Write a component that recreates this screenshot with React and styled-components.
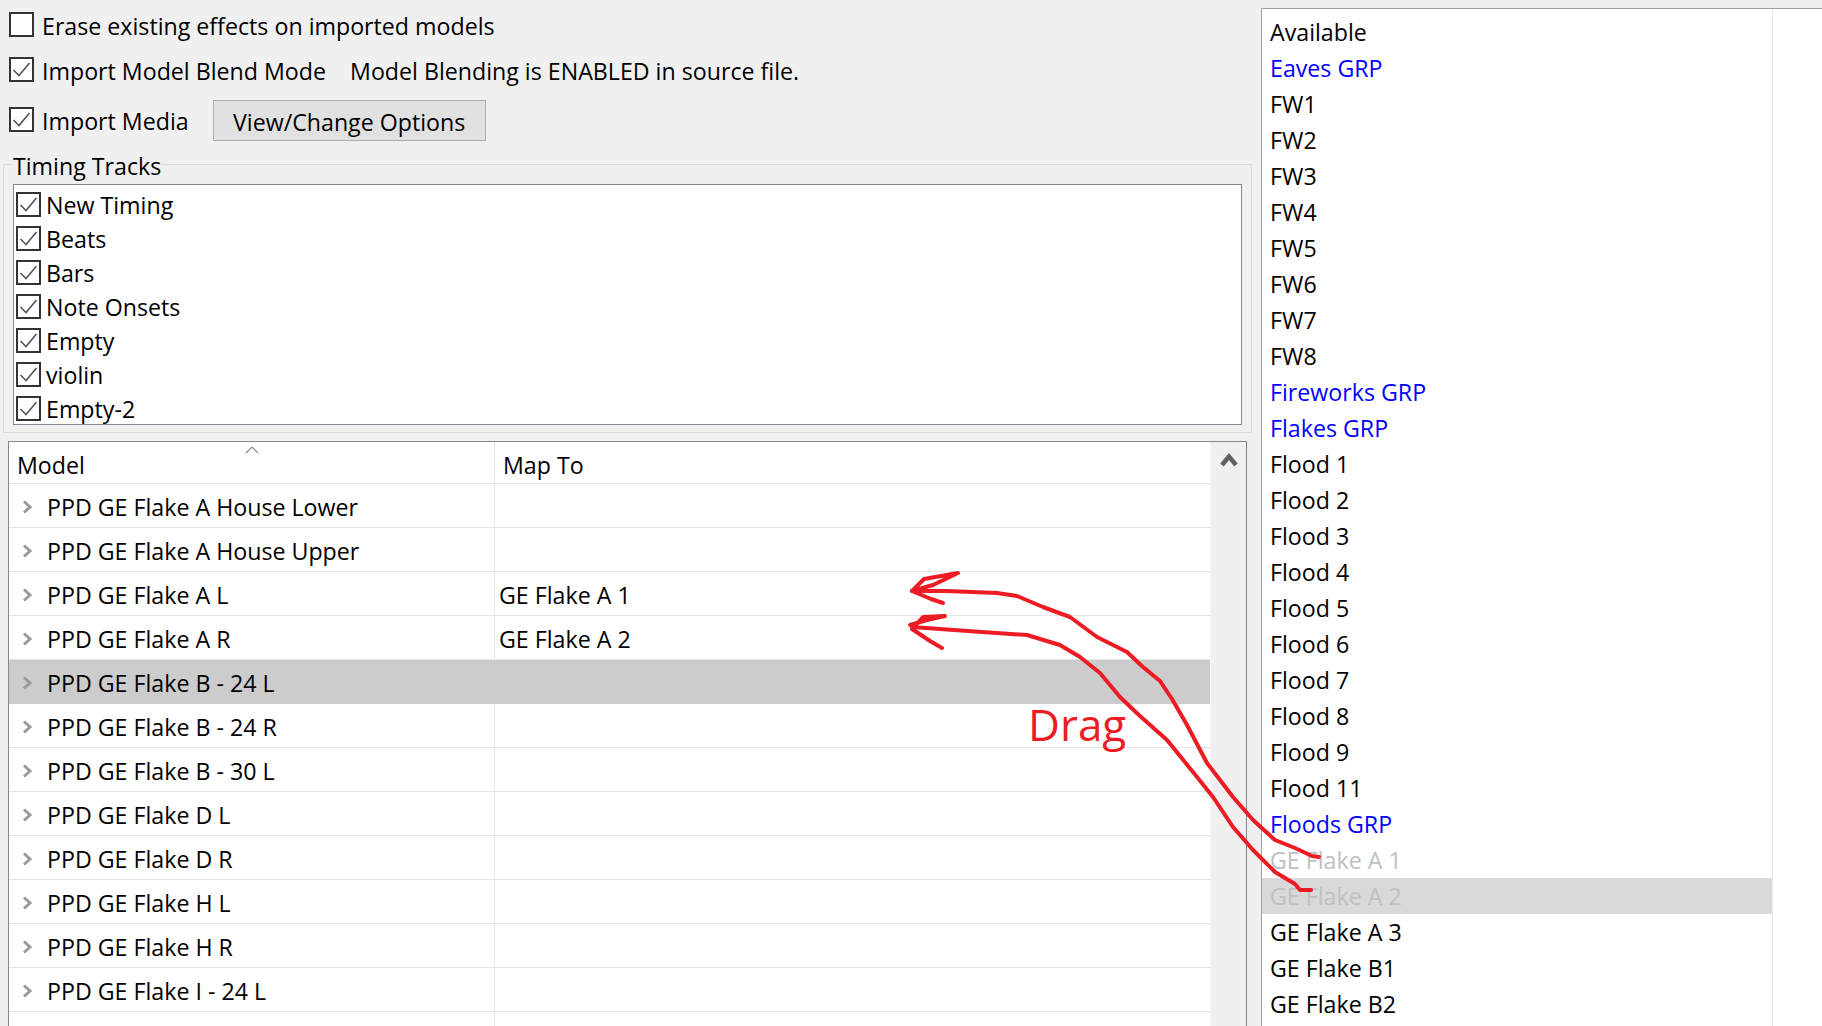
import React from 'react'
import styled, { createGlobalStyle } from 'styled-components'

const FONT = `"Open Sans", "Noto Sans", "Liberation Sans", sans-serif`
const RED = '#ed1c24'

const GlobalStyle = createGlobalStyle`
  html, body {
    margin: 0;
    padding: 0;
    background: #f0f0f0;
  }
  body {
    font-family: ${FONT};
    font-size: 23.2px;
    color: #000;
  }
`

const Window = styled.div`
  position: relative;
  display: flex;
  width: 1822px;
  height: 1026px;
  overflow: hidden;
  background: #f0f0f0;
`

const LeftPane = styled.div`
  width: 1261px;
  flex-shrink: 0;
  display: flex;
  flex-direction: column;
  min-height: 0;
`

const Options = styled.div`
  display: flex;
  flex-direction: column;
  padding: 2px 0 0 9px;
`

const OptionRow = styled.div`
  display: flex;
  align-items: center;
  height: ${props => props.h}px;
  margin-top: ${props => props.top || 0}px;
  line-height: 30px;
`

const Label = styled.span`
  margin-left: ${props => props.gap}px;
  padding-top: ${props => props.nudge || 0}px;
  white-space: nowrap;
`

const Note = styled.span`
  margin-left: 24px;
  padding-top: 3px;
  white-space: nowrap;
`

const Button = styled.button`
  box-sizing: border-box;
  width: 273px;
  height: 41px;
  margin: 1px 0 0 24px;
  padding: 3px 0 0;
  background: #e1e1e1;
  border: 1px solid #adadad;
  font-family: ${FONT};
  font-size: 23.2px;
  color: #000;
`

const GroupBox = styled.fieldset`
  box-sizing: border-box;
  min-width: 0;
  margin: 6px 9px 0 3px;
  padding: 2px 9px 7px 9px;
  border: 1px solid #dcdcdc;
`

const Legend = styled.legend`
  padding: 4px 0 0;
  line-height: 32px;
`

const TrackList = styled.div`
  box-sizing: border-box;
  height: 241px;
  padding: 2px 0 0 2px;
  background: #fff;
  border: 1px solid #828790;
  overflow: hidden;
`

const TrackRow = styled.div`
  display: flex;
  align-items: center;
  height: 34px;
  line-height: 30px;
`

const Grid = styled.div`
  flex: 1;
  min-height: 0;
  display: flex;
  margin: 8px 14px 0 8px;
  background: #fff;
  border: 1px solid #828790;
  border-bottom: none;
  overflow: hidden;
`

const GridBody = styled.div`
  flex: 1;
  display: flex;
  flex-direction: column;
`

const HeaderRow = styled.div`
  box-sizing: border-box;
  display: grid;
  grid-template-columns: 486px 1fr;
  height: 42px;
  border-bottom: 1px solid #e5e5e5;
  flex-shrink: 0;
`

const HeaderCell = styled.div`
  position: relative;
  box-sizing: border-box;
  display: flex;
  align-items: center;
  padding: 4px 0 0 8px;
  border-right: ${props => props.divider ? '1px solid #e5e5e5' : 'none'};
`

const SortMark = styled.svg`
  position: absolute;
  left: 236px;
  top: 4px;
`

const Row = styled.div`
  box-sizing: border-box;
  display: grid;
  grid-template-columns: 486px 1fr;
  height: 44px;
  flex-shrink: 0;
  background: ${props => props.selected ? '#cccccc' : '#fff'};
  border-bottom: 1px solid ${props => props.selected ? '#cccccc' : '#e5e5e5'};
  line-height: 30px;
`

const ModelCell = styled.div`
  box-sizing: border-box;
  display: flex;
  align-items: center;
  padding: 2px 0 0 13px;
  border-right: 1px solid ${props => props.selected ? '#cccccc' : '#e5e5e5'};
  white-space: nowrap;

  svg {
    margin-right: 14px;
    flex-shrink: 0;
  }
`

const MapCell = styled.div`
  display: flex;
  align-items: center;
  padding: 2px 0 0 4px;
  white-space: nowrap;
`

const ScrollBar = styled.div`
  width: 35px;
  flex-shrink: 0;
  display: flex;
  justify-content: center;
  padding-top: 9px;
  background: #f0f0f0;
  border-left: 1px solid #f7f7f7;
`

const RightPane = styled.div`
  flex: 1;
  display: flex;
  margin-top: 8px;
  background: #fff;
  border-top: 1px solid #a0a0a0;
  border-left: 1px solid #a0a0a0;
`

const ItemColumn = styled.div`
  width: 510px;
  flex-shrink: 0;
  padding-top: 5px;
  border-right: 1px solid #ebebeb;
`

const Item = styled.div`
  height: 36px;
  line-height: 36px;
  padding-left: 8px;
  white-space: nowrap;
  color: ${props => props.kind === 'group' ? '#0000ff' : props.kind === 'used' ? '#c0c0c0' : '#000'};
  background: ${props => props.selected ? '#d9d9d9' : 'transparent'};
`

const Overlay = styled.svg`
  position: absolute;
  left: 0;
  top: 0;
  pointer-events: none;
`

const Check = ({ checked }) => (
  <svg width="25" height="25" viewBox="0 0 25 25">
    <rect x="1" y="1" width="23" height="23" fill="#fff" stroke="#333" strokeWidth="2" />
    {checked && <path d="M4.5 13 L10 18.5 L20.5 6" fill="none" stroke="#555" strokeWidth="1.6" />}
  </svg>
)

const Expander = () => (
  <svg width="11" height="14" viewBox="0 0 11 14">
    <path d="M2 1.5 L8 7 L2 12.5" fill="none" stroke="#9a9a9a" strokeWidth="3" />
  </svg>
)

const tracks = ['New Timing', 'Beats', 'Bars', 'Note Onsets', 'Empty', 'violin', 'Empty-2']

const models = [
  { name: 'PPD GE Flake A House Lower' },
  { name: 'PPD GE Flake A House Upper' },
  { name: 'PPD GE Flake A L', map: 'GE Flake A 1' },
  { name: 'PPD GE Flake A R', map: 'GE Flake A 2' },
  { name: 'PPD GE Flake B - 24 L', selected: true },
  { name: 'PPD GE Flake B - 24 R' },
  { name: 'PPD GE Flake B - 30 L' },
  { name: 'PPD GE Flake D L' },
  { name: 'PPD GE Flake D R' },
  { name: 'PPD GE Flake H L' },
  { name: 'PPD GE Flake H R' },
  { name: 'PPD GE Flake I - 24 L' },
  { name: 'PPD GE Flake I - 24 R' },
]

const available = [
  { t: 'Available' },
  { t: 'Eaves GRP', kind: 'group' },
  ...[1, 2, 3, 4, 5, 6, 7, 8].map(n => ({ t: `FW${n}` })),
  { t: 'Fireworks GRP', kind: 'group' },
  { t: 'Flakes GRP', kind: 'group' },
  ...[1, 2, 3, 4, 5, 6, 7, 8, 9, 11].map(n => ({ t: `Flood ${n}` })),
  { t: 'Floods GRP', kind: 'group' },
  { t: 'GE Flake A 1', kind: 'used' },
  { t: 'GE Flake A 2', kind: 'used', selected: true },
  { t: 'GE Flake A 3' },
  { t: 'GE Flake B1' },
  { t: 'GE Flake B2' },
  { t: 'GE Flake B3' },
]

const arrow1 = 'M912 591 L947 591 L997 593 L1017 596 L1043 607 L1070 617 L1097 637 L1127 652 L1143 667 L1160 681 L1172 699 L1187 725 L1207 763 L1233 797 L1253 820 L1275 840 L1295 848 L1312 856 L1319 857'
const head1 = 'M943 603 L931 599 L912 591 L924 579 L958 573 L933 585 L912 591'
const arrow2 = 'M912 627 L968 631 L1027 635 L1060 645 L1080 657 L1100 673 L1120 697 L1140 716 L1167 740 L1197 777 L1213 797 L1233 827 L1253 850 L1275 872 L1295 884 L1300 890 L1311 890'
const head2 = 'M942 648 L930 641 L912 629 L923 617 L945 616 L927 620 L910 625'

export default function App() {
  return (
    <>
      <GlobalStyle />
      <Window>
        <LeftPane>
          <Options>
            <OptionRow h={45}>
              <Check />
              <Label gap={8} nudge={3}>Erase existing effects on imported models</Label>
            </OptionRow>
            <OptionRow h={44}>
              <Check checked />
              <Label gap={8} nudge={3}>Import Model Blend Mode</Label>
              <Note>Model Blending is ENABLED in source file.</Note>
            </OptionRow>
            <OptionRow h={41} top={8}>
              <Check checked />
              <Label gap={8} nudge={3}>Import Media</Label>
              <Button>View/Change Options</Button>
            </OptionRow>
          </Options>

          <GroupBox>
            <Legend>Timing Tracks</Legend>
            <TrackList>
              {tracks.map(t => (
                <TrackRow key={t}>
                  <Check checked />
                  <Label gap={5} nudge={1}>{t}</Label>
                </TrackRow>
              ))}
            </TrackList>
          </GroupBox>

          <Grid>
            <GridBody>
              <HeaderRow>
                <HeaderCell divider>
                  Model
                  <SortMark width="14" height="8" viewBox="0 0 14 8">
                    <path d="M1 7 L7 1 L13 7" fill="none" stroke="#8a8a8a" strokeWidth="1.2" />
                  </SortMark>
                </HeaderCell>
                <HeaderCell>Map To</HeaderCell>
              </HeaderRow>
              {models.map(m => (
                <Row key={m.name} selected={m.selected}>
                  <ModelCell selected={m.selected}>
                    <Expander />
                    {m.name}
                  </ModelCell>
                  <MapCell>{m.map}</MapCell>
                </Row>
              ))}
            </GridBody>
            <ScrollBar>
              <svg width="18" height="16" viewBox="0 0 18 16">
                <path d="M2 14 L9 5.5 L16 14" fill="none" stroke="#606060" strokeWidth="4.5" />
              </svg>
            </ScrollBar>
          </Grid>
        </LeftPane>

        <RightPane>
          <ItemColumn>
            {available.map(a => (
              <Item key={a.t} kind={a.kind} selected={a.selected}>{a.t}</Item>
            ))}
          </ItemColumn>
        </RightPane>

        <Overlay width="1822" height="1026" viewBox="0 0 1822 1026">
          <g fill="none" stroke={RED} strokeWidth="4" strokeLinejoin="round" strokeLinecap="round">
            <path d={arrow1} />
            <path d={head1} />
            <path d={arrow2} />
            <path d={head2} />
          </g>
          <text x="1028" y="741" fill={RED} fontFamily={FONT} fontSize="44">Drag</text>
        </Overlay>
      </Window>
    </>
  )
}
